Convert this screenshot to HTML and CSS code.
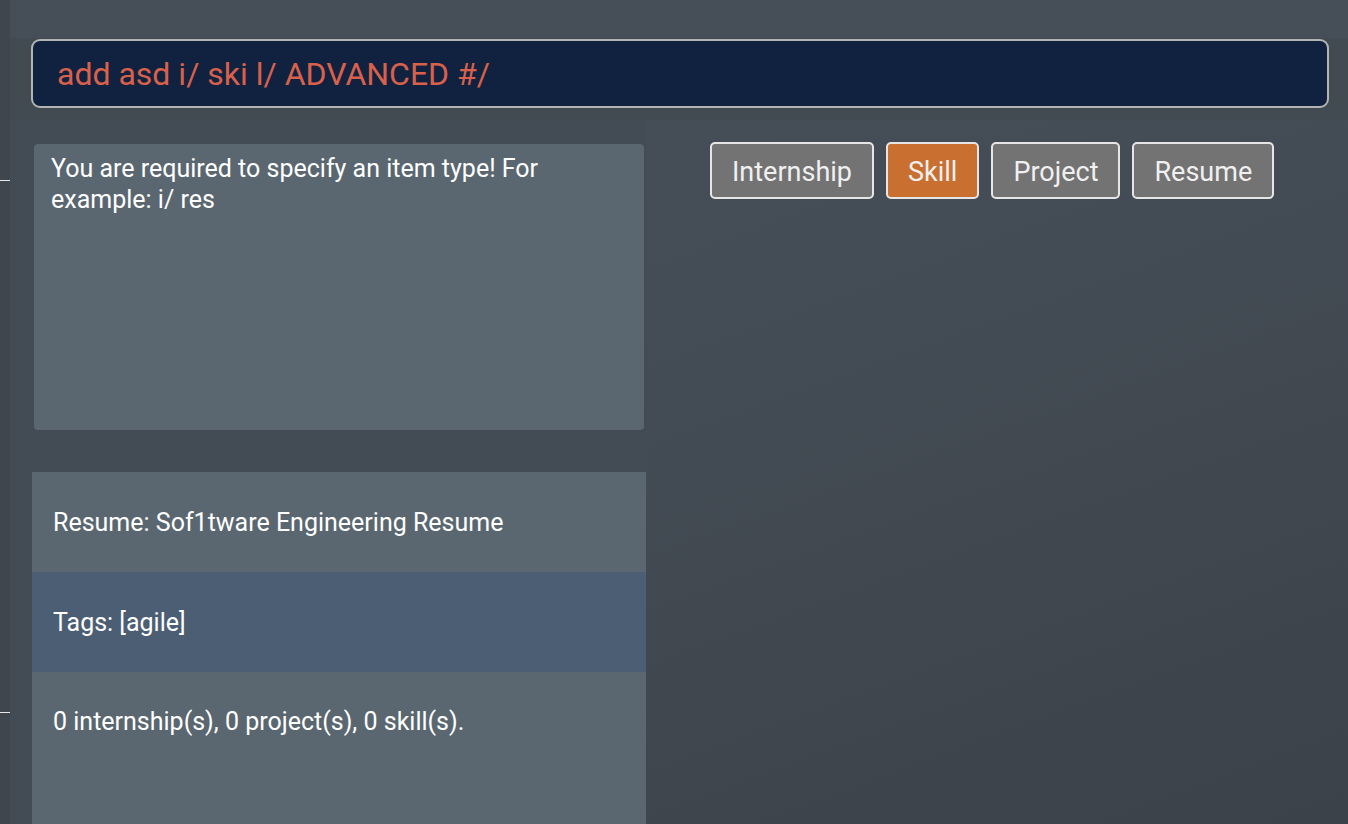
FILE: index.html
```html
<!DOCTYPE html>
<html>
<head>
<meta charset="utf-8">
<link rel="stylesheet" href="styles.css">
</head>
<body>
<div class="app">
  <div class="strip">
    <div class="tick t1"></div>
    <div class="tick t2"></div>
  </div>
  <div class="main">
    <div class="topbar"></div>
    <div class="cmdband">
      <div class="cmd">add asd i/ ski l/ ADVANCED #/</div>
    </div>
    <div class="content">
      <div class="left">
        <div class="result">You are required to specify an item type! For example: i/ res</div>
        <div class="list">
          <div class="row">Resume: Sof1tware Engineering Resume</div>
          <div class="row sel">Tags: [agile]</div>
          <div class="row tall">0 internship(s), 0 project(s), 0 skill(s).</div>
        </div>
      </div>
      <div class="right">
        <div class="tabs">
          <div class="tab">Internship</div>
          <div class="tab active">Skill</div>
          <div class="tab">Project</div>
          <div class="tab">Resume</div>
        </div>
      </div>
    </div>
  </div>
</div>
</body>
</html>
```

FILE: styles.css
```css
* { box-sizing: border-box; }
html, body { margin: 0; padding: 0; }
body {
  width: 1348px;
  height: 824px;
  overflow: hidden;
  font-family: Roboto, "Liberation Sans", sans-serif;
  background: linear-gradient(160deg, #48515a 0%, #434b54 50%, #3b4249 100%);
}
.app { display: flex; height: 824px; }
.strip {
  width: 10px;
  background: #3f464d;
  position: relative;
  flex: none;
}
.tick { position: absolute; left: 0; width: 10px; height: 1px; background: #e8e8e8; }
.t1 { top: 180px; }
.t2 { top: 712px; }
.main { flex: 1; display: flex; flex-direction: column; }
.topbar { height: 38px; background: #464f58; }
.cmdband {
  height: 82px;
  background: #424a52;
  padding: 1px 19px 0 21px;
}
.cmd {
  height: 69px;
  border: 2px solid #b3b3b3;
  border-radius: 9px;
  background: #10223f;
  color: #d9614b;
  font-size: 32px;
  padding: 0 0 0 24px;
  line-height: 66px;
}
.content { flex: 1; display: flex; }
.left {
  width: 636px;
  background: #434b54;
  display: flex;
  flex-direction: column;
  padding-top: 24px;
}
.result {
  margin-left: 24px;
  width: 610px;
  height: 286px;
  background: #5a6770;
  border-radius: 4px;
  color: #ffffff;
  font-size: 25px;
  line-height: 31px;
  padding: 9px 60px 0 17px;
}
.list {
  margin-top: 42px;
  margin-left: 22px;
  width: 614px;
  flex: 1;
  background: #5a6770;
}
.row {
  height: 100px;
  display: flex;
  align-items: center;
  padding-left: 21px;
  color: #ffffff;
  font-size: 25px;
  background: #5a6770;
}
.row.sel { background: #4c5e74; }
.row.tall { align-items: flex-start; padding-top: 35px; }
.right { flex: 1; padding: 23px 0 0 64px; }
.tabs { display: flex; gap: 12px; }
.tab {
  height: 57px;
  margin-top: -1px;
  border: 2px solid #e6e6e6;
  border-radius: 5px;
  background: #737373;
  color: #f0f0f0;
  font-size: 27px;
  line-height: 56px;
  padding: 0 20px;
}
.tab.active { background: #c96f30; }
```
